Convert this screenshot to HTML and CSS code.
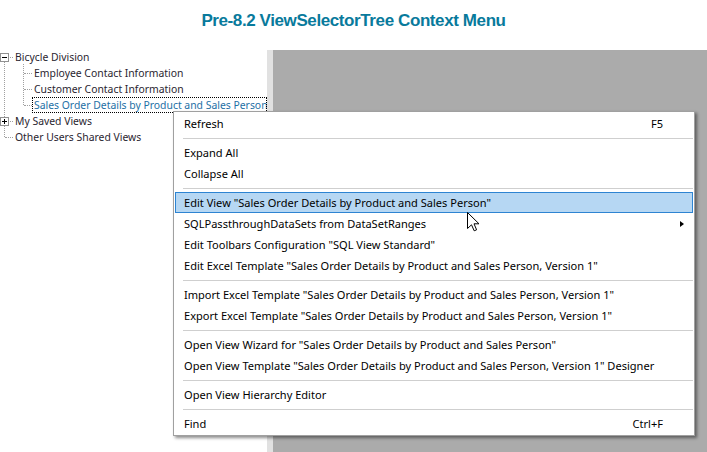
FILE: index.html
```html
<!DOCTYPE html>
<html lang="en">
<head>
  <meta charset="UTF-8" />
  <meta name="viewport" content="width=device-width, initial-scale=1.0" />
  <title>Pre-8.2 ViewSelectorTree Context Menu</title>
  <link rel="stylesheet" href="styles.css">
</head>
<body>
  <h1 class="title">Pre-8.2 ViewSelectorTree Context Menu</h1>

  <div class="workspace">
    <div class="tree">
      <ul class="tree-root">
        <li class="node expanded">
          <div class="row">
            <svg class="toggle" width="9" height="9" viewBox="0 0 9 9"><rect x="0.5" y="0.5" width="8" height="8" fill="#fff" stroke="#919191"/><path d="M2 4.5h5" stroke="#000"/></svg>
            Bicycle Division
          </div>
          <ul class="children">
            <li class="node leaf"><div class="row">Employee Contact Information</div></li>
            <li class="node leaf"><div class="row">Customer Contact Information</div></li>
            <li class="node leaf selected"><div class="row">Sales Order Details by Product and Sales Person</div></li>
          </ul>
        </li>
        <li class="node">
          <div class="row">
            <svg class="toggle" width="9" height="9" viewBox="0 0 9 9"><rect x="0.5" y="0.5" width="8" height="8" fill="#fff" stroke="#919191"/><path d="M2 4.5h5M4.5 2v5" stroke="#000"/></svg>
            My Saved Views
          </div>
        </li>
        <li class="node last"><div class="row">Other Users Shared Views</div></li>
      </ul>
    </div>
    <div class="splitter"></div>
    <div class="canvas"></div>
  </div>

  <div class="menu">
    <div class="item">Refresh<span class="shortcut">F5</span></div>
    <div class="sep"></div>
    <div class="item">Expand All</div>
    <div class="item">Collapse All</div>
    <div class="sep"></div>
    <div class="item hover">Edit View "Sales Order Details by Product and Sales Person"</div>
    <div class="item">SQLPassthroughDataSets from DataSetRanges<span class="submenu"></span></div>
    <div class="item">Edit Toolbars Configuration "SQL View Standard"</div>
    <div class="item">Edit Excel Template "Sales Order Details by Product and Sales Person, Version 1"</div>
    <div class="sep"></div>
    <div class="item">Import Excel Template "Sales Order Details by Product and Sales Person, Version 1"</div>
    <div class="item">Export Excel Template "Sales Order Details by Product and Sales Person, Version 1"</div>
    <div class="sep"></div>
    <div class="item">Open View Wizard for "Sales Order Details by Product and Sales Person"</div>
    <div class="item">Open View Template "Sales Order Details by Product and Sales Person, Version 1" Designer</div>
    <div class="sep"></div>
    <div class="item">Open View Hierarchy Editor</div>
    <div class="sep"></div>
    <div class="item">Find<span class="shortcut">Ctrl+F</span></div>
  </div>

  <svg class="cursor" width="13" height="20" viewBox="0 0 13 20">
    <path d="M0.5 0.5 L0.5 16.5 L4.5 12.8 L7.2 18.8 L9.6 17.8 L7 11.8 L12 11.8 Z" fill="#fff" stroke="#000" stroke-linejoin="round"/>
  </svg>
</body>
</html>
```

FILE: styles.css
```css
body {
  margin: 0;
  background: #fff;
  font-family: 'Segoe UI', 'Noto Sans', 'DejaVu Sans', sans-serif;
  font-size: 11.05px;
  color: #000;
  height: 452px;
  overflow: hidden;
  display: flex;
  flex-direction: column;
}
.title {
  margin: 0;
  height: 50px;
  padding-top: 11px;
  box-sizing: border-box;
  text-align: center;
  font-family: 'Liberation Sans', Arial, sans-serif;
  font-size: 17px;
  line-height: 20px;
  font-weight: bold;
  letter-spacing: -0.4px;
  color: #087a9c;
}
.workspace {
  flex: 1;
  display: flex;
}
.tree {
  width: 267px;
  background: #fff;
  position: relative;
  overflow: hidden;
  font-size: 10.4px;
}
.splitter {
  width: 6px;
  background: #e1e1e1;
}
.canvas {
  flex: 1;
  background: #ababab;
}

/* tree */
.tree ul {
  list-style: none;
  margin: 0;
  padding: 0;
}
.tree-root {
  position: relative;
  margin-top: -1px !important;
}
.tree-root::before {
  content: '';
  position: absolute;
  left: 4px;
  top: 10px;
  height: 78px;
  border-left: 1px dotted #a0a0a0;
}
.row {
  position: relative;
  height: 16px;
  line-height: 16px;
  padding-left: 15px;
  color: #2a2530;
  white-space: nowrap;
}
.row::before {
  content: '';
  position: absolute;
  left: 5px;
  top: 8px;
  width: 8px;
  border-top: 1px dotted #a0a0a0;
}
.toggle {
  position: absolute;
  left: 0;
  top: 4px;
}
.children {
  position: relative;
}
.children::before {
  content: '';
  position: absolute;
  left: 23px;
  top: -1px;
  height: 41px;
  border-left: 1px dotted #a0a0a0;
}
.leaf .row {
  padding-left: 34px;
}
.leaf .row::before {
  left: 24px;
  width: 8px;
}
.selected .row {
  color: #1d6fa5;
}
.selected .row::after {
  content: '';
  position: absolute;
  left: 32px;
  right: 0;
  top: 0;
  bottom: 0;
  border: 1px dotted #000;
}

/* context menu */
.menu {
  position: absolute;
  left: 173px;
  top: 111px;
  width: 518px;
  padding: 1px 1px;
  background: #fff;
  border: 1px solid #a0a0a0;
  box-shadow: 2px 2px 3px rgba(0, 0, 0, 0.45);
}
.item {
  display: flex;
  align-items: center;
  height: 21px;
  padding: 0 29px 0 8px;
  border: 1px solid transparent;
  box-sizing: border-box;
  white-space: nowrap;
  position: relative;
}
.item.hover {
  background: #b6d7f3;
  border-color: #2d84d2;
}
.shortcut {
  margin-left: auto;
}
.submenu {
  position: absolute;
  right: 8px;
  top: 7px;
  border-left: 4px solid #000;
  border-top: 3.5px solid transparent;
  border-bottom: 3.5px solid transparent;
}
.sep {
  height: 8px;
  margin-left: 8px;
  position: relative;
}
.sep::after {
  content: '';
  position: absolute;
  left: 0;
  right: 0;
  top: 4px;
  border-top: 1px solid #cfcfcf;
}

.cursor {
  position: absolute;
  left: 467px;
  top: 212px;
}
```
